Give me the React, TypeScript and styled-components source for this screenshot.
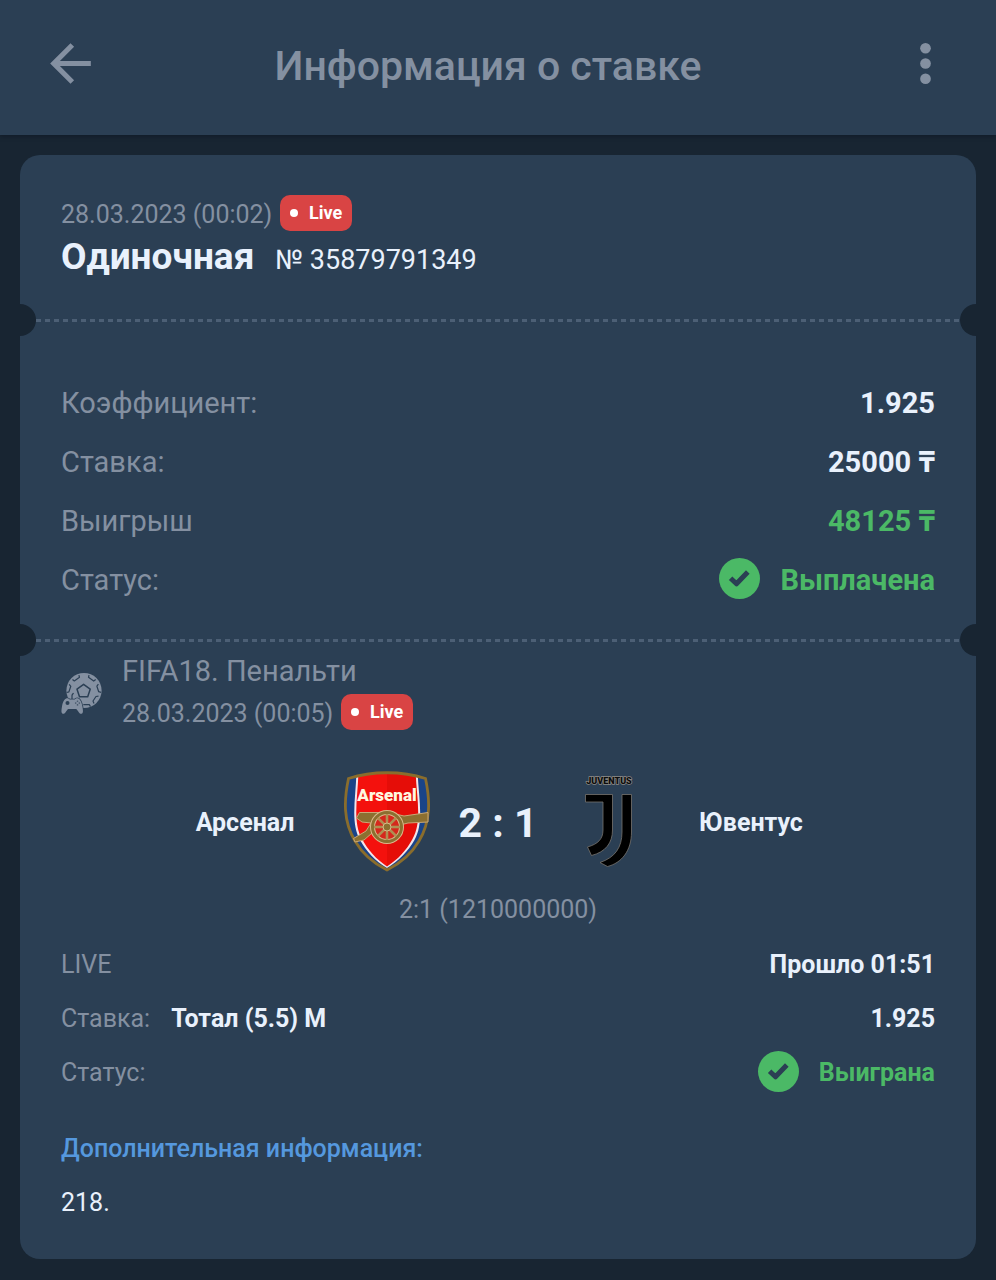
import React from "react";
import styled, { createGlobalStyle } from "styled-components";

const color = {
  page: "#182532",
  panel: "#2b3f54",
  muted: "#8490a1",
  text: "#e9f1fc",
  green: "#4bb966",
  red: "#d94444",
  link: "#5598de",
  dash: "#4c5f75",
};

const GlobalStyle = createGlobalStyle`
  * { box-sizing: border-box; }
  body {
    margin: 0;
    background: ${color.page};
    color: ${color.text};
    font-family: Roboto, "Noto Sans", sans-serif;
  }
`;

const Header = styled.header`
  display: flex;
  align-items: center;
  justify-content: space-between;
  height: 135px;
  padding: 0 40px 8px;
  background: ${color.panel};
  color: ${color.muted};
  box-shadow: 0 1px 4px rgba(8, 14, 30, 0.5);
`;

const IconButton = styled.button`
  display: flex;
  padding: 0;
  border: 0;
  background: none;
  color: inherit;
  cursor: pointer;
`;

const PageTitle = styled.h1`
  flex: 1;
  margin: 0;
  padding: 4px 20px 0 0;
  text-align: center;
  font-size: 41px;
  line-height: 48px;
  font-weight: 500;
`;

const Main = styled.main`
  padding: 20px;
`;

const Ticket = styled.article`
  overflow: hidden;
  padding-bottom: 29px;
  border-radius: 20px;
  background: ${color.panel};
`;

const Section = styled.section<{ $top: number; $bottom?: number }>`
  padding: ${(p) => p.$top}px 41px ${(p) => p.$bottom ?? 0}px;
`;

const Perforation = styled.div`
  display: flex;
  align-items: center;
  justify-content: space-between;
  height: 32px;
`;

const Notch = styled.span<{ $side: "left" | "right" }>`
  width: 16px;
  height: 32px;
  background: ${color.page};
  border-radius: ${(p) => (p.$side === "left" ? "0 16px 16px 0" : "16px 0 0 16px")};
`;

const DashedLine = styled.span`
  flex: 1;
  height: 3px;
  background: repeating-linear-gradient(90deg, ${color.dash} 0 5px, transparent 5px 9px);
`;

const DateLine = styled.div`
  display: flex;
  align-items: center;
  gap: 8px;
  height: 36px;
  color: ${color.muted};
  font-size: 25px;
  line-height: 36px;

  > time {
    padding-top: 3px;
  }
`;

const Badge = styled.span`
  display: flex;
  align-items: center;
  justify-content: space-between;
  width: 72px;
  height: 36px;
  padding: 0 10px;
  border-radius: 10px;
  background: ${color.red};
  color: #fff;
  font-size: 18px;
  font-weight: 700;
`;

const Dot = styled.i`
  width: 8px;
  height: 8px;
  border-radius: 50%;
  background: #fff;
`;

const BetLine = styled.div`
  display: flex;
  align-items: baseline;
  gap: 21px;
  height: 73px;
  line-height: 52px;
`;

const BetType = styled.h2`
  margin: 0;
  font-size: 37px;
  font-weight: 700;
`;

const BetNumber = styled.span`
  font-size: 27px;
`;

const Rows = styled.dl<{ $large?: boolean }>`
  margin: 0;
  font-size: ${(p) => (p.$large ? 29 : 25)}px;
  line-height: ${(p) => (p.$large ? 59 : 54)}px;
`;

const Row = styled.div`
  display: flex;
  justify-content: space-between;
`;

const Label = styled.dt`
  color: ${color.muted};
`;

const Value = styled.dd<{ $good?: boolean; $start?: boolean }>`
  display: flex;
  align-items: center;
  gap: 20px;
  flex: ${(p) => (p.$start ? "1" : "none")};
  margin: 0 0 0 ${(p) => (p.$start ? 21 : 0)}px;
  color: ${(p) => (p.$good ? color.green : color.text)};
  font-weight: 700;

  > svg {
    margin-bottom: 4px;
  }
`;

const EventHead = styled.div`
  display: flex;
  gap: 20px;
  padding-bottom: 31px;
  color: ${color.muted};

  > svg {
    margin-top: 16px;
  }
`;

const League = styled.h3`
  margin: 0;
  padding-bottom: 8px;
  font-size: 29px;
  line-height: 30px;
  font-weight: 400;
`;

const Match = styled.div`
  display: flex;
  align-items: center;
  justify-content: center;
  height: 120px;
`;

const Team = styled.span`
  width: 180px;
  padding-top: 3px;
  text-align: center;
  font-size: 25px;
  font-weight: 700;
`;

const Crest = styled.span`
  display: flex;
  justify-content: center;
  width: 104px;
`;

const Score = styled.strong`
  width: 118px;
  padding-top: 3px;
  text-align: center;
  font-size: 41px;
  font-weight: 700;
`;

const Periods = styled.p`
  margin: 0;
  text-align: center;
  color: ${color.muted};
  font-size: 25px;
  line-height: 57px;
`;

const MoreInfo = styled.div`
  padding-top: 22px;
  font-size: 25px;
  line-height: 54px;
`;

const MoreTitle = styled.h4`
  margin: 0;
  color: ${color.link};
  font-size: inherit;
  font-weight: 500;
`;

const MoreText = styled.p`
  margin: 0;
`;

const BackIcon = () => (
  <svg width="61" height="61" viewBox="0 0 24 24" fill="currentColor" aria-hidden="true">
    <path d="M20 11H7.83l5.59-5.59L12 4l-8 8 8 8 1.41-1.41L7.83 13H20z" />
  </svg>
);

const MoreIcon = () => (
  <svg width="61" height="61" viewBox="0 0 24 24" fill="currentColor" aria-hidden="true">
    <circle cx="12" cy="6" r="2.1" />
    <circle cx="12" cy="12" r="2.1" />
    <circle cx="12" cy="18" r="2.1" />
  </svg>
);

const CheckIcon = () => (
  <svg width="41" height="41" viewBox="0 0 41 41" aria-hidden="true">
    <circle cx="20.5" cy="20.5" r="20.5" fill={color.green} />
    <path
      d="M11.6 20.2l5.900 5.600L28.800 14"
      fill="none"
      stroke={color.panel}
      strokeWidth="5"
      strokeLinejoin="round"
    />
  </svg>
);

const FootballIcon = () => (
  <svg width="41" height="42" viewBox="0 0 41 42" aria-hidden="true">
    <circle cx="23" cy="18.5" r="17.6" fill={color.muted} />
    <g fill="none" stroke={color.panel} strokeLinejoin="round">
      <path d="M22.600 12.300l6.600 4.900-2.500 7.600h-8.200l-2.500-7.600z" strokeWidth="1.500" />
      <path
        d="M11.500 7.500l1.800 1.500 5.200-3.700-.6-2.200M28 3.100l-.5 2.200 5.200 3.800 2-1.500M5.700 20.500l2.200-.6 1.900-5.600-1.600-2M40 20.300l-2.300-.6-1.800-5.500 1.500-2M29.500 34.600l-1.200-2h-6M33 31.500l-1-2.500 3-4.500 2.500-.3"
        strokeWidth="1.200"
      />
    </g>
    <path
      d="M5.200 26.500c1.500-.6 2.800.2 3.500 1h5c.7-.8 2-1.600 3.500-1 2.600 1 3.700 5 4.300 8.500.6 3.700.9 6.500-1 6.800-2.600.3-3.800-4.300-5.500-4.800H7.400c-1.700.5-2.900 5.100-5.500 4.800-1.900-.3-1.600-3.100-1-6.800.6-3.500 1.700-7.500 4.300-8.500z"
      fill={color.muted}
      stroke={color.panel}
      strokeWidth="1.600"
      paintOrder="stroke"
    />
    <path
      d="M11 27v-3.500c0-1 1-1.500 1.500-2.500"
      fill="none"
      stroke={color.panel}
      strokeWidth="1.200"
    />
    <circle cx="6.500" cy="31" r="2" fill={color.panel} />
    <g fill={color.panel} opacity=".7">
      <circle cx="16.500" cy="29.300" r=".8" />
      <circle cx="16.500" cy="32.900" r=".8" />
      <circle cx="14.700" cy="31.100" r=".8" />
      <circle cx="18.300" cy="31.100" r=".8" />
    </g>
  </svg>
);

const SPOKES = [0, 45, 90, 135, 180, 225, 270, 315];
const SHIELD =
  "M4.500 8.500C28 .8 58 .8 81.500 8.500 86 30 87 51 75 71 68 83 57 93 43 100 29 93 18 83 11 71-1 51 0 30 4.500 8.500z";

const ArsenalCrest = () => (
  <svg width="86" height="102" viewBox="0 0 86 102" role="img" aria-label="Арсенал">
    <defs>
      <clipPath id="shield">
        <path d={SHIELD} />
      </clipPath>
    </defs>
    <g clipPath="url(#shield)">
      <rect width="86" height="102" fill="#1a4488" />
      <path d="M12.500 0h61c1 28 7 52-3 70-6 11-16 21-27.500 28C31 91 22 81 16 70 6 52 12 28 12.500 0z" fill="#f3e6ec" />
      <path d="M14.500 0H43v96.500C32 89 24 80 18 69 8 51 14 28 14.500 0z" fill="#f4110d" />
      <path d="M43 0h28.500c1 28 7 51-3 69-6 11-14 20-25.500 27.500z" fill="#e50d08" />
    </g>
    <path d={SHIELD} fill="none" stroke="#8a6d2c" strokeWidth="2.800" />
    <path
      d="M12.500 48l3-5.500H45l15 3.500 24-3.500v9.500l-20 1-12 3-14 4-10 3-8 7-9 2-1.500-3.500L22 61l5-8-9-1z"
      fill="#8c6f30"
      stroke="#c9a878"
      strokeWidth="1"
      strokeLinejoin="round"
    />
    <circle cx="43" cy="57" r="14.500" fill="#d5281c" stroke="#d9b98b" strokeWidth="5" />
    <circle cx="43" cy="57" r="14.500" fill="none" stroke="#8c6f30" strokeWidth="3" />
    {SPOKES.map((angle) => (
      <path
        key={angle}
        d="M43 57V44"
        transform={`rotate(${angle} 43 57)`}
        stroke="#b08f52"
        strokeWidth="2.600"
      />
    ))}
    <circle cx="43" cy="57" r="4" fill="#8c6f30" stroke="#d9b98b" />
    <text
      x="43"
      y="31"
      textAnchor="middle"
      fill="#fff8e0"
      fontFamily="Roboto, sans-serif"
      fontSize="17"
      fontWeight="900"
    >
      Arsenal
    </text>
  </svg>
);

const JuventusCrest = () => (
  <svg width="50" height="94" viewBox="0 0 50 94" overflow="visible" role="img" aria-label="Ювентус">
    <text
      x="25"
      y="10"
      textAnchor="middle"
      fill="#0c0c0c"
      stroke="#8d8a86"
      strokeWidth="1.500"
      paintOrder="stroke"
      fontFamily="Roboto, sans-serif"
      fontSize="9"
      fontWeight="900"
    >
      JUVENTUS
    </text>
    <g fill="#000" stroke="#77736e" strokeWidth=".8">
      <path d="M1.500 20.500h27V56c0 13-7 22-21 25.500L3.500 73C14 70 19 65 19 56V28H1.500z" />
      <path d="M38 20.500h9.500V58c0 19-10 31-24 34.500L16 88.500c15-5 22-15 22-30.500z" />
    </g>
  </svg>
);

const LiveBadge = () => (
  <Badge>
    <Dot />
    Live
  </Badge>
);

const Divider = () => (
  <Perforation>
    <Notch $side="left" />
    <DashedLine />
    <Notch $side="right" />
  </Perforation>
);

export default function App() {
  return (
    <>
      <GlobalStyle />
      <Header>
        <IconButton type="button" aria-label="Назад">
          <BackIcon />
        </IconButton>
        <PageTitle>Информация о ставке</PageTitle>
        <IconButton type="button" aria-label="Меню">
          <MoreIcon />
        </IconButton>
      </Header>
      <Main>
        <Ticket>
          <Section $top={40}>
            <DateLine>
              <time dateTime="2023-03-28T00:02">28.03.2023 (00:02)</time>
              <LiveBadge />
            </DateLine>
            <BetLine>
              <BetType>Одиночная</BetType>
              <BetNumber>№ 35879791349</BetNumber>
            </BetLine>
          </Section>
          <Divider />
          <Section $top={38} $bottom={14}>
            <Rows $large>
              <Row>
                <Label>Коэффициент:</Label>
                <Value>1.925</Value>
              </Row>
              <Row>
                <Label>Ставка:</Label>
                <Value>25000 ₸</Value>
              </Row>
              <Row>
                <Label>Выигрыш</Label>
                <Value $good>48125 ₸</Value>
              </Row>
              <Row>
                <Label>Статус:</Label>
                <Value $good>
                  <CheckIcon />
                  Выплачена
                </Value>
              </Row>
            </Rows>
          </Section>
          <Divider />
          <Section $top={0}>
            <EventHead>
              <FootballIcon />
              <div>
                <League>FIFA18. Пенальти</League>
                <DateLine>
                  <time dateTime="2023-03-28T00:05">28.03.2023 (00:05)</time>
                  <LiveBadge />
                </DateLine>
              </div>
            </EventHead>
            <Match>
              <Team>Арсенал</Team>
              <Crest>
                <ArsenalCrest />
              </Crest>
              <Score>2 : 1</Score>
              <Crest>
                <JuventusCrest />
              </Crest>
              <Team>Ювентус</Team>
            </Match>
            <Periods>2:1 (1210000000)</Periods>
            <Rows>
              <Row>
                <Label>LIVE</Label>
                <Value>Прошло 01:51</Value>
              </Row>
              <Row>
                <Label>Ставка:</Label>
                <Value $start>Тотал (5.5) М</Value>
                <Value>1.925</Value>
              </Row>
              <Row>
                <Label>Статус:</Label>
                <Value $good>
                  <CheckIcon />
                  Выиграна
                </Value>
              </Row>
            </Rows>
            <MoreInfo>
              <MoreTitle>Дополнительная информация:</MoreTitle>
              <MoreText>218.</MoreText>
            </MoreInfo>
          </Section>
        </Ticket>
      </Main>
    </>
  );
}
